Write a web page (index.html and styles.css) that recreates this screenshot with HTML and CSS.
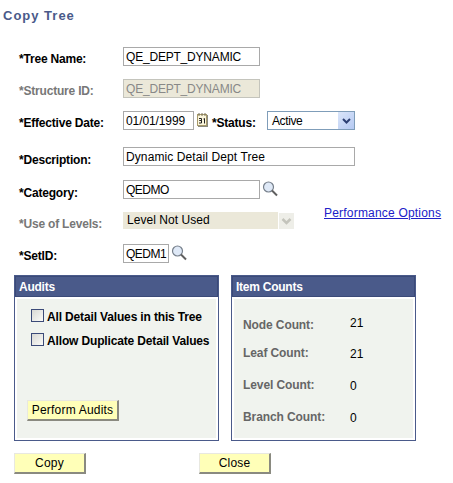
FILE: index.html
```html
<!DOCTYPE html>
<html lang="en">
<head>
  <meta charset="utf-8">
  <title>Copy Tree</title>
  <link rel="stylesheet" href="styles.css">
</head>
<body>
  <h1 class="page-title">Copy Tree</h1>

  <!-- Main form -->
  <div class="form">
    <div class="row row-name">
      <label class="field-label">*Tree Name:</label>
      <input class="field field-long" type="text" value="QE_DEPT_DYNAMIC">
    </div>
    <div class="row row-structure">
      <label class="field-label disabled">*Structure ID:</label>
      <input class="field field-long field-disabled" type="text" value="QE_DEPT_DYNAMIC" disabled>
    </div>
    <div class="row row-date">
      <label class="field-label">*Effective Date:</label>
      <input class="field field-date" type="text" value="01/01/1999">
      <svg class="icon-cal" width="13" height="15" viewBox="0 0 13 15">
        <rect x="1.5" y="2.5" width="9" height="11" fill="#fbf6dc" stroke="#a89a6a"/>
        <rect x="11" y="3" width="1" height="11" fill="#8a8a80"/>
        <rect x="2" y="14" width="10" height="1" fill="#8a8a80"/>
        <path d="M3 1v3M6 1v3M9 1v3" stroke="#77705a"/>
        <path d="M3 6.5h2.5v2h-2v0h2v2.500h-2.500M7.500 7l1-.5v5" fill="none" stroke="#222"/>
      </svg>
      <label class="field-label status-label">*Status:</label>
      <div class="select">
        <span class="select-value">Active</span>
        <span class="select-arrow">
          <svg width="15" height="15" viewBox="0 0 15 15"><path d="M4 6l3.500 3.500L11 6" fill="none" stroke="#2c3f73" stroke-width="2"/></svg>
        </span>
      </div>
    </div>
    <div class="row row-desc">
      <label class="field-label">*Description:</label>
      <input class="field field-desc" type="text" value="Dynamic Detail Dept Tree">
    </div>
    <div class="row row-category">
      <label class="field-label">*Category:</label>
      <input class="field field-long field-tight" type="text" value="QEDMO">
      <svg class="icon-search" width="16" height="16" viewBox="0 0 16 16">
        <circle cx="6.500" cy="6" r="5" fill="#dfe9f7" stroke="#77808c" stroke-width="1.200"/>
        <path d="M10 9.500l5 5" stroke="#5f5f5f" stroke-width="2"/>
      </svg>
    </div>
    <div class="row row-levels">
      <label class="field-label disabled">*Use of Levels:</label>
      <div class="select-disabled">Level Not Used</div>
      <span class="arrow-disabled">
        <svg width="15" height="15" viewBox="0 0 15 15"><path d="M3.500 6l4 4 4-4" fill="none" stroke="#c4c4bc" stroke-width="2.500"/></svg>
      </span>
      <a class="link" href="#">Performance Options</a>
    </div>
    <div class="row row-setid">
      <label class="field-label">*SetID:</label>
      <input class="field field-setid field-tight" type="text" value="QEDM1">
      <svg class="icon-search icon-search-tight" width="16" height="16" viewBox="0 0 16 16">
        <circle cx="6.500" cy="6" r="5" fill="#dfe9f7" stroke="#77808c" stroke-width="1.200"/>
        <path d="M10 9.500l5 5" stroke="#5f5f5f" stroke-width="2"/>
      </svg>
    </div>
  </div>

  <!-- Group boxes -->
  <div class="panels">
    <div class="panel panel-audits">
      <div class="panel-head">Audits</div>
      <div class="panel-body">
        <div class="check-row"><span class="check"></span><span class="check-text">All Detail Values in this Tree</span></div>
        <div class="check-row"><span class="check"></span><span class="check-text">Allow Duplicate Detail Values</span></div>
        <button class="btn btn-audit">Perform Audits</button>
      </div>
    </div>
    <div class="panel panel-counts">
      <div class="panel-head">Item Counts</div>
      <div class="panel-body counts">
        <div class="count-label">Node Count:</div><div class="count-value count-up">21</div>
        <div class="count-label">Leaf Count:</div><div class="count-value count-down">21</div>
        <div class="count-label">Level Count:</div><div class="count-value count-down">0</div>
        <div class="count-label">Branch Count:</div><div class="count-value count-down">0</div>
      </div>
    </div>
  </div>

  <div class="actions">
    <button class="btn btn-action">Copy</button>
    <button class="btn btn-action">Close</button>
  </div>
</body>
</html>
```

FILE: styles.css
```css
body {
  margin: 0;
  background: #fff;
  font-family: "Liberation Sans", Arial, sans-serif;
  font-size: 12px;
  color: #000;
  overflow: hidden;
}

.page-title {
  margin: 0;
  padding: 8px 0 0 3px;
  height: 38px;
  box-sizing: border-box;
  font-size: 13px;
  line-height: 15px;
  letter-spacing: 1px;
  font-weight: bold;
  color: #4a5a8a;
}

.form {
  padding: 9px 0 0 19px;
}

.row {
  display: flex;
  align-items: center;
  height: 19px;
}

.row-structure, .row-date {
  margin-top: 13px;
}

.row-desc {
  margin-top: 17px;
}

.row-category {
  margin-top: 14px;
}

.row-levels {
  margin-top: 13px;
  height: 17px;
}

.row-setid {
  margin-top: 15px;
}

.field-label {
  width: 104px;
  flex-shrink: 0;
  padding-top: 4px;
  font-weight: bold;
  letter-spacing: -0.2px;
}

.row-desc .field-label, .row-category .field-label, .row-levels .field-label {
  padding-top: 6px;
}

.field-label.disabled {
  color: #777;
}

.field {
  box-sizing: border-box;
  height: 19px;
  margin: 0;
  padding: 0 0 0 2px;
  border: 1px solid #a9a9a9;
  border-radius: 0;
  outline: none;
  background: #fff;
  font-family: inherit;
  font-size: 12px;
  letter-spacing: -0.2px;
  color: #000;
}

.field-long {
  width: 137px;
}

.field-disabled {
  background: #ebe8d9;
  border-color: #c4c4bc;
  color: #888;
}

.field-date {
  width: 71px;
  letter-spacing: -0.1px;
}

.field-desc {
  width: 232px;
  letter-spacing: 0.1px;
}

.field-setid {
  width: 46px;
}

.field-tight {
  letter-spacing: -0.5px;
}

.icon-cal {
  margin-left: 2px;
  margin-top: -2px;
}

.status-label {
  width: 43px;
  margin-left: 3px;
  white-space: nowrap;
}

.select {
  display: flex;
  align-items: center;
  justify-content: space-between;
  box-sizing: border-box;
  width: 88px;
  height: 19px;
  margin-left: 12px;
  padding: 0 0 0 4px;
  border: 1px solid #7f9db9;
  letter-spacing: -0.4px;
}

.select-arrow {
  display: flex;
  width: 16px;
  height: 17px;
  align-items: center;
  justify-content: center;
  background: linear-gradient(135deg, #dbe6fa, #b5c9f2);
}

.select-disabled {
  box-sizing: border-box;
  width: 155px;
  height: 17px;
  padding: 1px 0 0 4px;
  background: #ebe8d9;
  letter-spacing: 0.05px;
}

.arrow-disabled {
  display: flex;
  align-items: center;
  justify-content: center;
  width: 15px;
  height: 16px;
  margin-left: 1px;
  background: #eeeee8;
}

.link {
  align-self: flex-start;
  margin: -6px 0 0 30px;
  color: #2020c8;
  letter-spacing: 0.2px;
}

.icon-search {
  margin-left: 2px;
  margin-top: -1px;
}

.icon-search-tight {
  margin-top: -2px;
}

.panels {
  display: flex;
  gap: 12px;
  margin: 12px 0 0 14px;
}

.panel {
  box-sizing: border-box;
  height: 166px;
  padding: 0 0 2px;
  border: 1px solid #4a5a8a;
  display: flex;
  flex-direction: column;
}

.panel-audits {
  width: 205px;
}

.panel-counts {
  width: 185px;
}

.panel-head {
  box-sizing: border-box;
  height: 21px;
  padding: 3px 0 0 3px;
  border: 1px solid #3b4a78;
  background: #4a5a8a;
  color: #fff;
  font-weight: bold;
  letter-spacing: -0.25px;
}

.panel-body {
  flex: 1;
  margin: 2px 2px 0;
  background: #f0f3ee;
}

.panel-audits .panel-body {
  padding: 10px 0 0 14px;
}

.check-row {
  display: flex;
  align-items: flex-start;
  height: 14px;
  margin-bottom: 10px;
  gap: 3px;
  font-weight: bold;
  letter-spacing: -0.15px;
  white-space: nowrap;
}

.check-text {
  margin-top: 1px;
}

.check {
  box-sizing: border-box;
  width: 13px;
  height: 13px;
  border: 1px solid #3b4a78;
  background: linear-gradient(135deg, #d8d8d4, #fbfbf8);
}

.btn {
  box-sizing: border-box;
  height: 21px;
  margin: 0;
  padding: 0;
  border: 1px solid;
  border-color: #e8e8e0 #8a8a80 #8a8a80 #e8e8e0;
  border-width: 1px 2px 2px 1px;
  border-radius: 0;
  background: #ffffb8;
  font-family: inherit;
  font-size: 12px;
  letter-spacing: 0.2px;
  color: #000;
}

.btn-audit {
  display: block;
  width: 92px;
  margin: 53px 0 0 -4px;
}

.counts {
  display: grid;
  grid-template-columns: 107px 1fr;
  grid-template-rows: 24px 32px 32px 32px;
  padding: 14px 0 0 9px;
  align-items: center;
}

.count-label {
  font-weight: bold;
  letter-spacing: -0.1px;
  color: #666;
}

.count-value.count-up {
  margin-top: -5px;
}

.count-value.count-down {
  margin-top: 2px;
}

.actions {
  display: flex;
  gap: 113px;
  margin: 12px 0 0 14px;
}

.btn-action {
  width: 72px;
}
```
